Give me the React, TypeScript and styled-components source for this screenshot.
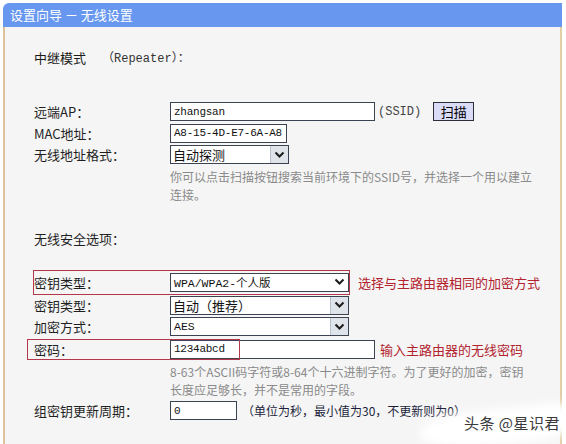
import React, { FC } from 'react'
import styled, { createGlobalStyle } from 'styled-components'

const cjk = '"Noto Sans CJK SC", "Noto Sans", sans-serif'
const mono = '"Liberation Mono", "Noto Sans CJK SC", monospace'

const GlobalStyle = createGlobalStyle`
  html, body {
    margin: 0;
    padding: 0;
    background: #ffffff;
    overflow: hidden;
  }
  body {
    font-family: ${cjk};
  }
`

const Chevron: FC = () => (
  <svg width="11" height="8" viewBox="0 0 11 8">
    <path d="M1.5 1.5 L5.5 5.5 L9.5 1.5" fill="none" stroke="#1c1c1c" strokeWidth="2" />
  </svg>
)

type SelectProps = { width: number; value: string; flat?: boolean; mono?: boolean }

const Select: FC<SelectProps> = ({ width, value, flat, mono: m }) => (
  <SelectBox $width={width}>
    <SelectText $mono={m}>{value}</SelectText>
    <ArrowBox $flat={flat}>
      <Chevron />
    </ArrowBox>
  </SelectBox>
)

const App: FC = () => {
  return (
    <>
      <GlobalStyle />
      <Page>
        <Window>
          <TitleBar>设置向导 － 无线设置</TitleBar>
          <Body>
            <ModeLine>
              <span>中继模式</span>
              <ModeTag>（Repeater）：</ModeTag>
            </ModeLine>

            <FieldGroup $top={34}>
              <Row>
                <Label>远端AP：</Label>
                <Value>
                  <TextInput $width={205} value="zhangsan" readOnly />
                  <Hint>(SSID)</Hint>
                  <ScanButton>扫描</ScanButton>
                </Value>
              </Row>
              <Row>
                <Label>MAC地址：</Label>
                <Value>
                  <TextInput $width={117} value="A8-15-4D-E7-6A-A8" readOnly />
                </Value>
              </Row>
              <Row>
                <Label>无线地址格式：</Label>
                <Value>
                  <Select width={119} value="自动探测" />
                </Value>
              </Row>
              <HelpText>
                你可以点击扫描按钮搜索当前环境下的SSID号，并选择一个用以建立
                <br />
                连接。
              </HelpText>
            </FieldGroup>

            <SectionTitle>无线安全选项：</SectionTitle>

            <FieldGroup $top={21}>
              <Row $height={25}>
                <Highlight $left={-1} $width={317} />
                <Label>密钥类型：</Label>
                <Value>
                  <Select width={179} value="WPA/WPA2-个人版" flat mono />
                  <Note>选择与主路由器相同的加密方式</Note>
                </Value>
              </Row>
              <Row>
                <Label>密钥类型：</Label>
                <Value>
                  <Select width={179} value="自动（推荐）" />
                </Value>
              </Row>
              <Row>
                <Label>加密方式：</Label>
                <Value>
                  <Select width={179} value="AES" mono />
                </Value>
              </Row>
              <Row $top={1}>
                <Highlight $left={-7} $width={213} />
                <Label>密码：</Label>
                <Value>
                  <TextInput $width={205} value="1234abcd" readOnly />
                  <Note $gap={5}>输入主路由器的无线密码</Note>
                </Value>
              </Row>
              <HelpText $top={3}>
                8-63个ASCII码字符或8-64个十六进制字符。为了更好的加密，密钥
                <br />
                长度应足够长，并不是常用的字段。
              </HelpText>
              <Row $top={1}>
                <Label>组密钥更新周期：</Label>
                <Value>
                  <TextInput $width={67} value="0" readOnly />
                  <Unit>（单位为秒，最小值为30，不更新则为0）</Unit>
                </Value>
              </Row>
            </FieldGroup>
          </Body>
        </Window>
        <Watermark>
          <Brush />
          <WatermarkText>头条 @星识君</WatermarkText>
        </Watermark>
      </Page>
    </>
  )
}

const Page = styled.div`
  position: relative;
  width: 566px;
  height: 444px;
  padding: 3px 0 0 3px;
  box-sizing: border-box;
  overflow: hidden;
`

const Window = styled.div`
  width: 559px;
  height: 460px;
  display: flex;
  flex-direction: column;
`

const TitleBar = styled.div`
  height: 24px;
  line-height: 24px;
  padding-left: 7px;
  background: #6797ef;
  border-top-left-radius: 6px;
  color: #ffffff;
  font-family: ${cjk};
  font-size: 13px;
`

const Body = styled.div`
  flex: 1;
  background: #f5f5f5;
  border-left: 2px solid #dcc39a;
  border-right: 2px solid #e3cfa6;
  padding: 20px 0 0 29px;
`

const ModeLine = styled.div`
  display: flex;
  align-items: center;
  gap: 16px;
  height: 20px;
  font-size: 13px;
  color: #1a1a1a;
`

const ModeTag = styled.span`
  font-family: ${mono};
  font-size: 12px;
  color: #333;
`

const FieldGroup = styled.div<{ $top: number }>`
  margin-top: ${p => p.$top}px;
  display: flex;
  flex-direction: column;
`

const Row = styled.div<{ $height?: number; $top?: number }>`
  position: relative;
  display: grid;
  grid-template-columns: 136px 1fr;
  align-items: center;
  height: ${p => p.$height ?? 21.5}px;
  margin-top: ${p => p.$top ?? 0}px;
`

const Highlight = styled.div<{ $left: number; $width: number }>`
  position: absolute;
  top: 0;
  bottom: 0;
  left: ${p => p.$left}px;
  width: ${p => p.$width}px;
  border: 1px solid #b4384a;
  box-sizing: border-box;
  pointer-events: none;
`

const Label = styled.div`
  font-size: 13px;
  color: #1f1f1f;
  white-space: nowrap;
`

const Value = styled.div`
  display: flex;
  align-items: center;
`

const TextInput = styled.input<{ $width: number }>`
  width: ${p => p.$width}px;
  height: 19px;
  box-sizing: border-box;
  margin: 0;
  padding: 0 2px 0 3px;
  border: 1px solid #3b4352;
  background: #ffffff;
  font-family: ${mono};
  font-size: 11px;
  letter-spacing: -0.25px;
  color: #111;
  outline: none;
`

const Hint = styled.span`
  margin-left: 3px;
  font-family: ${mono};
  font-size: 12px;
  color: #444;
`

const ScanButton = styled.button`
  margin-left: 12px;
  width: 41px;
  height: 19px;
  padding: 0;
  border: 1px solid #2c2f3a;
  background: #d9dbf7;
  font-family: ${cjk};
  font-size: 13px;
  line-height: 17px;
  color: #000;
`

const SelectBox = styled.div<{ $width: number }>`
  width: ${p => p.$width}px;
  height: 19px;
  box-sizing: border-box;
  display: flex;
  align-items: center;
  border: 1px solid #3b4352;
  background: #ffffff;
`

const SelectText = styled.span<{ $mono?: boolean }>`
  flex: 1;
  padding-left: ${p => (p.$mono ? 3 : 2)}px;
  font-family: ${p => (p.$mono ? mono : cjk)};
  font-size: ${p => (p.$mono ? 11.5 : 13)}px;
  color: #111;
  white-space: nowrap;
`

const ArrowBox = styled.div<{ $flat?: boolean }>`
  width: 17px;
  height: 17px;
  display: flex;
  align-items: center;
  justify-content: center;
  background: ${p => (p.$flat ? '#ffffff' : '#dfe4ea')};
  border-left: ${p => (p.$flat ? 'none' : '1px solid #b8c0cc')};
`

const HelpText = styled.div<{ $top?: number }>`
  margin: ${p => p.$top ?? 2}px 0 0 136px;
  font-size: 12px;
  line-height: 18px;
  color: #8a8a8a;
`

const SectionTitle = styled.div`
  margin-top: 25px;
  height: 20px;
  line-height: 20px;
  font-size: 13px;
  color: #1f1f1f;
`

const Note = styled.span<{ $gap?: number }>`
  margin-left: ${p => p.$gap ?? 9}px;
  font-size: 13px;
  color: #b3232e;
  white-space: nowrap;
`

const Unit = styled.span`
  margin-left: 5px;
  font-size: 12px;
  color: #1c1f3c;
  white-space: nowrap;
`

const Watermark = styled.div`
  position: absolute;
  right: 6px;
  bottom: 7px;
  width: 130px;
  height: 30px;
  display: flex;
  align-items: center;
  justify-content: flex-end;
`

const Brush = styled.div`
  position: absolute;
  left: -10px;
  right: -14px;
  top: 2px;
  bottom: -8px;
  background: #ffffff;
  border-radius: 40% 20% 30% 50%;
  filter: blur(4px);
  transform: rotate(-6deg);
`

const WatermarkText = styled.span`
  position: relative;
  font-family: ${cjk};
  font-size: 15px;
  color: #3a3a3a;
  letter-spacing: 0.5px;
`

export default App
